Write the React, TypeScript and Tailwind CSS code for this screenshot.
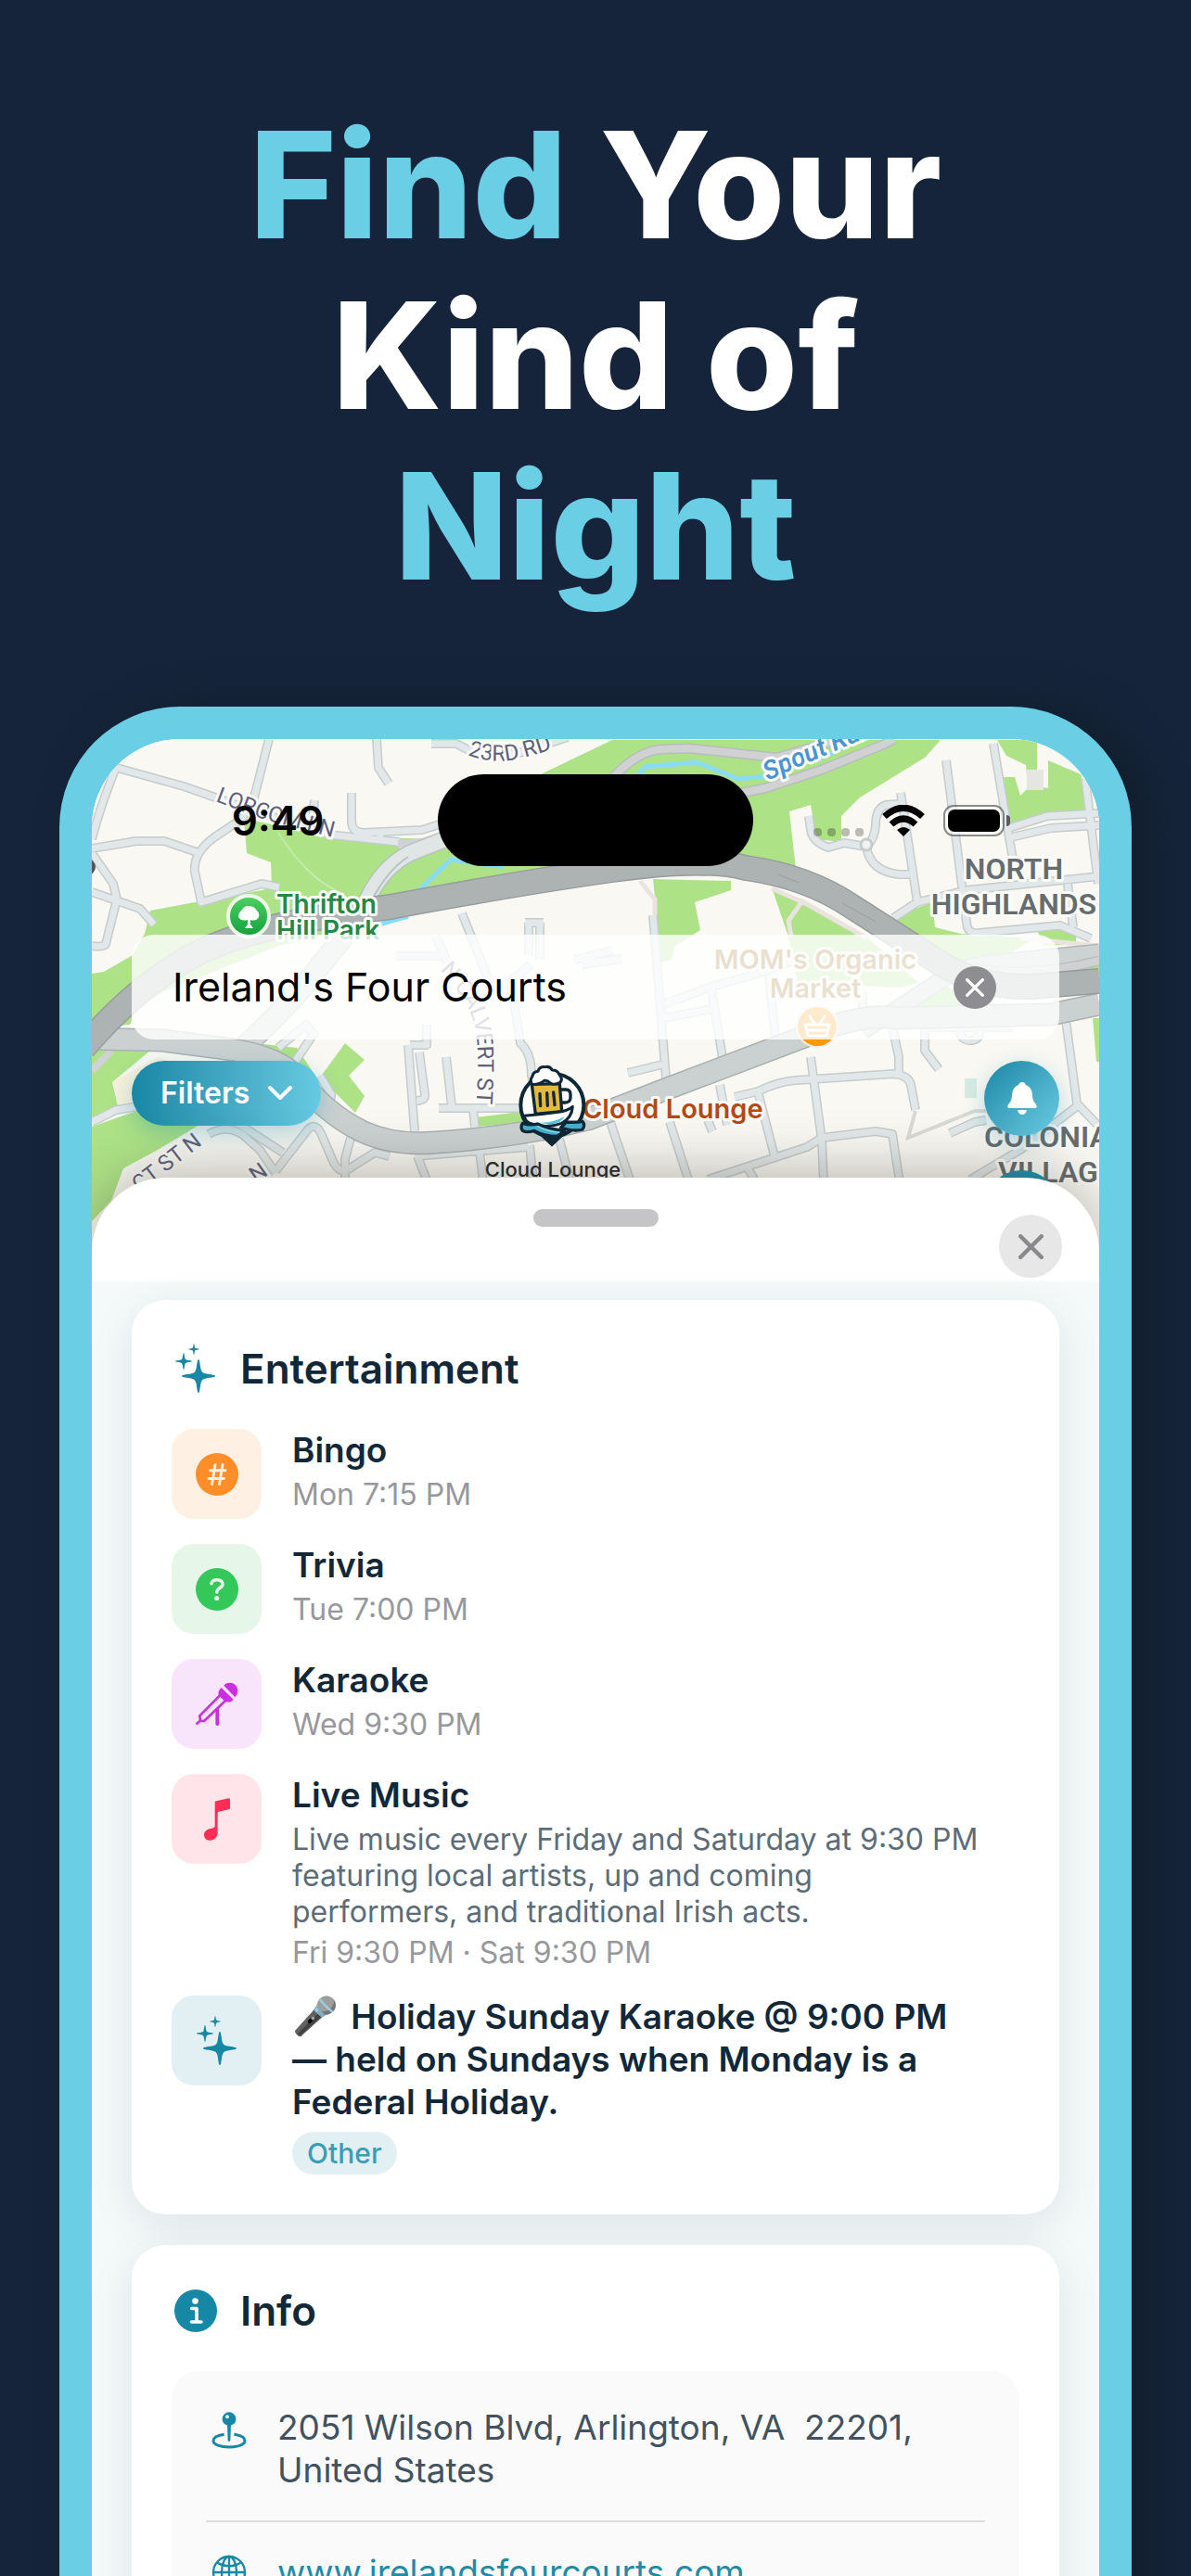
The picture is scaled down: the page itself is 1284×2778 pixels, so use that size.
import type { ReactNode } from "react";

const MINOR_ROADS = [
  "M126 828 198 848 269 873 354 900 429 908 442 920",
  "M290 797 274 860 261 883 231 903Q208 920 210 940L217 973 282 953 301 957",
  "M126 825Q108 870 99 905",
  "M406 797 408 828 419 845",
  "M465 802H492L513 813 560 812 612 795",
  "M379 855V885Q379 898 392 898L455 895 480 887",
  "M339 863 337 885",
  "M99 915 147 907H177L215 920",
  "M99 920 122 953 126 970 114 1018Q112 1022 99 1020",
  "M99 962 151 980 166 997",
  "M410 895V905",
  "M498 985 527 1057Q532 1070 550 1058L572 1040",
  "M470 1010 490 1055",
  "M551 1060 561 1125Q573 1135 573 1160L590 1230",
  "M440 1127 447 1220",
  "M442 1127H460V1105",
  "M452 1135 458 1180Q459 1187 449 1187",
  "M481 1140 487 1193",
  "M473 1195H560",
  "M510 1195 512 1215",
  "M427 1031H476",
  "M570 995V1030M582 995V1035M566 995H586",
  "M620 1035 660 1025M628 1040 670 1034",
  "M300 1130 330 1105 338 1115 318 1145",
  "M345 1160 357 1180Q358 1190 345 1185",
  "M99 1210 125 1197 150 1193",
  "M225 1223Q245 1212 262 1224L280 1240 297 1265",
  "M297 1263 332 1218Q340 1210 346 1222L358 1250Q366 1270 380 1258L404 1243 420 1247",
  "M259 1213 305 1243",
  "M378 1227 372 1250V1275",
  "M447 1247 569 1237",
  "M450 1247 461 1275",
  "M517 1242 521 1275",
  "M571 1235 575 1275",
  "M603 1228 615 1275",
  "M704 987 718 1163",
  "M767 1067 780 1147",
  "M716 1083 767 1064 817 1050 870 1030",
  "M716 1098 767 1088",
  "M677 1157 718 1147",
  "M829 1052 837 1130",
  "M930 1070V1105",
  "M874 1140 886 1230 888 1275",
  "M792 1183 817 1177Q840 1166 858 1165L964 1158Q980 1160 982 1170L987 1197",
  "M962 1107 969 1140V1157",
  "M817 1177 835 1247",
  "M763 1272 870 1237 886 1227 944 1220 962 1223 970 1275",
  "M776 1170 784 1213",
  "M722 1210 743 1275",
  "M658 1210 680 1275",
  "M763 1208 768 1220",
  "M805 1258 815 1275",
  "M1092 1108H1003Q997 1108 997 1114V1133L1012 1153",
  "M1035 1108Q1034 1122 1046 1122T1056 1108",
  "M1149 1100 1161 1190 1185 1215",
  "M1161 1193 1100 1240 1046 1272",
  "M1024 1222 1051 1210 1063 1208",
  "M1020 820 1042 995Q1043 1008 1056 1006L1143 998 1176 1012",
  "M1071 802 1092 927",
  "M1170 840 1184 953",
  "M1088 893 1129 880 1185 877",
  "M1090 903 1133 893 1185 890",
  "M1042 960 1185 945",
  "M1151 953 1157 1000",
  "M971 855 989 973",
  "M969 867 955 868Q944 872 944 890 943 905 934 913L910 909 893 914Q876 908 874 895L872 880",
  "M934 913Q938 940 970 943H981",
  "M963 990 989 973 1042 960",
];

const GREENS = [
  "M263 883 266 920 292 930 293 958 210 973 162 982 156 1007 143 1030 112 1048 99 1050V1108L140 1105 150 1080 300 1020 440 985 620 950 820 935 858 937 851 875 874 868 880 905 907 908V880L927 860 997 817 1014 798H660L583 835 480 905 360 902Z",
  "M372 1125 393 1143 376 1160 393 1182 383 1200 345 1162Z",
  "M275 1125 300 1140 340 1160 320 1130Z",
  "M99 1133H162L121 1167 127 1193 99 1205ZM99 1215 150 1197 205 1190 215 1213 170 1240 133 1260 120 1295 99 1317Z",
  "M513 1205 569 1198V1210L513 1215Z",
  "M704 948 788 950V960L749 973 755 1003 728 1020 724 1035 712 1038 708 985Z",
  "M833 960 866 970 932 1008 990 1060 970 1065 860 1060 850 1010Z",
  "M1005 973 1008 1000 1036 1007 1116 1012 1060 1045 1020 1035 960 990Z",
  "M1118 1003H1160V1018L1125 1020Z",
  "M1075 798H1118V848L1130 850 1130 820 1165 835 1178 873 1129 880 1088 893 1082 838H1094L1100 858 1108 850 1106 825 1085 815Z",
  "M955 1098 1018 1063 1096 1092Z",
  "M1140 1050 1185 1035V1050L1150 1060Z",
  "M1178 1098H1185V1145H1182Z",
];

function Halo({ children, className }: { children: ReactNode; className: string }) {
  return (
    <g className={`[paint-order:stroke] [stroke-linejoin:round] stroke-[#fbfbf8] [stroke-width:6px] ${className}`}>
      {children}
    </g>
  );
}

function BeerPin() {
  return (
    <svg x="540" y="1130" width="130" height="150" viewBox="0 0 390 450" stroke="#0f2836" strokeLinejoin="round" strokeLinecap="round">
      <path d="M108 262 165 316 222 262Z" fill="#0f2836" strokeWidth="6" />
      <circle cx="166" cy="185" r="102" fill="#fff" strokeWidth="12" />
      <path d="M195 135H210Q225 136 225 150V162Q224 176 208 177H197" fill="#fff" strokeWidth="10" />
      <path d="M100 118 190 116 197 206 112 214Z" fill="#e4b93f" strokeWidth="10" />
      <path d="M126 148 128 188M149 146 151 187M170 144 174 185" strokeWidth="10" fill="none" />
      <path d="M101 118Q92 104 102 92 104 78 120 76 124 60 143 62 158 58 166 72 184 72 188 86 202 100 192 112 170 122 160 114 150 104 140 106 122 120 101 118Z" fill="#fff" strokeWidth="9" />
      <path d="M76 220Q130 216 186 208 216 204 232 190 230 226 196 244 150 262 100 246 78 240 76 220Z" fill="#fff" strokeWidth="9" />
      <path d="M108 240Q160 248 206 222 196 244 160 248Z" fill="#55c3dc" stroke="none" />
      <path d="M70 244Q96 252 118 246 150 262 206 268L182 286Q140 286 108 268 84 276 70 268 62 256 70 244Z" fill="#45b2d0" strokeWidth="10" />
      <path d="M212 240Q240 242 264 238 274 250 264 264 236 272 194 258Z" fill="#45b2d0" strokeWidth="10" />
      <path d="M120 254Q150 270 188 274" fill="none" stroke="#8fdcec" strokeWidth="4" />
    </svg>
  );
}

function CityMap() {
  return (
    <svg
      role="img"
      aria-label="Map of North Highlands"
      className="absolute inset-x-0 top-0 h-[600px] w-full"
      viewBox="99 797 1086 600"
      preserveAspectRatio="xMidYMin slice"
    >
      <defs>
        <path id="lorcom" d="M232 864 285 884 400 914" />
        <path id="rd23" d="M504 814Q530 824 556 819T640 792" />
        <path id="spout" d="M828 842Q870 822 990 772" />
        <path id="calvert" d="M474 1046Q500 1072 510 1100T511 1220" />
        <path id="courtst" d="M150 1286 250 1210" />
        <linearGradient id="park" x1="0" y1="0" x2="0" y2="1">
          <stop offset="0" stopColor="#4fd062" />
          <stop offset="1" stopColor="#12a03c" />
        </linearGradient>
      </defs>
      <rect x="99" y="797" width="1086" height="600" fill="#f9f8f3" />
      <path d="M122 1166 170 1140 200 1150 150 1196 127 1192Z" fill="#f5f0dc" />
      <g fill="#ade287">
        {GREENS.map((d) => (
          <path key={d} d={d} />
        ))}
      </g>
      <rect x="1040" y="1163" width="13" height="21" fill="#d5ebe2" />
      <rect x="1107" y="830" width="18" height="22" fill="#e5e6e2" />
      <g fill="none" stroke="#8adcf5" strokeWidth="5">
        <path d="M452 960 486 927 543 935" />
        <path d="M689 835 695 827 751 822 796 840 830 837" />
        <path d="M880 820 927 797" />
        <path d="M405 998 440 988" />
      </g>
      <g fill="none" stroke="#ebe3df" strokeWidth="5">
        <path d="M690 950 706 970V987" />
        <path d="M866 970 850 993 853 1010" />
        <path d="M832 958 870 975 935 1012" />
        <path d="M1100 1012 1185 1020" />
      </g>
      <path d="M300 898Q330 945 362 960" fill="none" stroke="#c3ecab" strokeWidth="2" />
      <path d="M987 1198 979 1227 1051 1198H1063" fill="none" stroke="#d9dad4" strokeWidth="4" />
      <g fill="none" strokeLinejoin="round">
        <g stroke="#c6cccc" strokeWidth="10">
          {MINOR_ROADS.map((d) => (
            <path key={d} d={d} />
          ))}
        </g>
        <g stroke="#e2e8e9" strokeWidth="7">
          {MINOR_ROADS.map((d) => (
            <path key={d} d={d} />
          ))}
        </g>
        <circle cx="934" cy="911" r="6" stroke="#c6cccc" strokeWidth="3" fill="#f1f3f2" />
        <g stroke="#b9bcbd" strokeWidth="11">
          <path d="M661 838Q690 808 715 808L743 807 837 817 910 796" />
          <path d="M800 855 825 850 886 830 952 803 964 797" />
        </g>
        <g stroke="#cfd1d3" strokeWidth="8">
          <path d="M661 838Q690 808 715 808L743 807 837 817 910 796" />
          <path d="M800 855 825 850 886 830 952 803 964 797" />
          <path d="M429 910 455 908 480 900" />
        </g>
        <path d="M395 972Q412 935 442 920L480 905" stroke="#b9c0c0" strokeWidth="19" />
        <path d="M395 972Q412 935 442 920L480 905" stroke="#e0e5e6" strokeWidth="16" />
        <path d="M400 972Q418 938 440 924" stroke="#b9c0c0" strokeWidth="2" />
        <path d="M262 1130Q300 1095 328 1063L372 1008" stroke="#b4baba" strokeWidth="24" />
        <path d="M262 1130Q300 1095 328 1063L372 1008" stroke="#d0d5d5" strokeWidth="21" />
        <path d="M99 1155 120 1133" stroke="#cfd1d3" strokeWidth="8" />
        <g>
          <path d="M930 1112 1010 1060Q1040 1040 1075 1038L1185 1027" stroke="#b0b6b6" strokeWidth="19" />
          <path d="M930 1112 1010 1060Q1040 1040 1075 1038L1185 1027" stroke="#cdd3d3" strokeWidth="16" />
          <path d="M1050 1044Q1110 1055 1185 1036" stroke="#b9bcbd" strokeWidth="11" />
          <path d="M1050 1044Q1110 1055 1185 1036" stroke="#cfd1d3" strokeWidth="8" />
        </g>
        <path d="M90 1120 175 1122 251 1132Q300 1140 322 1163 350 1200 390 1220 425 1236 470 1232 560 1226 634 1207L722 1173 870 1117Q930 1092 965 1098L1133 1094 1185 1083" stroke="#a9b0b0" strokeWidth="25" />
        <path d="M90 1120 175 1122 251 1132Q300 1140 322 1163 350 1200 390 1220 425 1236 470 1232 560 1226 634 1207L722 1173 870 1117Q930 1092 965 1098L1133 1094 1185 1083" stroke="#cbd1d1" strokeWidth="22" />
        <path d="M90 1130Q150 1060 213 1028T421 978Q560 952 660 938T804 936Q870 945 919 978L1000 1030Q1050 1066 1112 1064L1185 1058" stroke="#969b9b" strokeWidth="28" />
        <path d="M90 1130Q150 1060 213 1028T421 978Q560 952 660 938T804 936Q870 945 919 978L1000 1030Q1050 1066 1112 1064L1185 1058" stroke="#adb2b2" strokeWidth="25" />
        <path d="M838 943 862 952M908 974 944 994" stroke="#989e9e" strokeWidth="1" />
      </g>
      <circle cx="94" cy="935" r="9" fill="#555" />

      <Halo className="font-['Roboto'] text-[24px] font-normal fill-[#5f6178]">
        <text><textPath href="#lorcom">LORCOM LN</textPath></text>
        <text><textPath href="#rd23">23RD RD</textPath></text>
        <text><textPath href="#calvert">N CALVERT ST</textPath></text>
        <text><textPath href="#courtst">CT ST N</textPath></text>
        <text x="276" y="1276" transform="rotate(-35 276 1276)">N</text>
      </Halo>
      <Halo className="font-['Roboto'] text-[28px] font-semibold italic fill-[#4b93d1]">
        <text><textPath href="#spout">Spout Run</textPath></text>
      </Halo>
      <Halo className="font-['Roboto'] text-[32px] font-semibold fill-[#676c6e]">
        <text x="1093" y="948" textAnchor="middle">NORTH</text>
        <text x="1093" y="986" textAnchor="middle">HIGHLANDS</text>
        <text x="1061" y="1237">COLONIAL</text>
        <text x="1076" y="1275">VILLAGE</text>
      </Halo>
      <Halo className="font-['Inter'] text-[28px] font-semibold fill-[#268746]">
        <text x="298" y="985">Thrifton</text>
        <text x="298" y="1013">Hill Park</text>
      </Halo>
      <circle cx="268" cy="988" r="22" fill="url(#park)" stroke="#eef6ea" strokeWidth="4" />
      <path d="M268 977Q274 977 276 981 280 984 279 989 276 994 270 992L270 997 273 1001H264L267 997V992Q260 994 257 989 257 984 261 981 263 977 268 977Z" fill="#fff" />
      <Halo className="font-['Inter'] text-[29px] font-semibold fill-[#8f6410]">
        <text x="879" y="1045" textAnchor="middle">MOM's Organic</text>
        <text x="879" y="1076" textAnchor="middle">Market</text>
      </Halo>
      <circle cx="881" cy="1107" r="23" fill="#f2f0ea" />
      <circle cx="881" cy="1107" r="21" fill="#f99a08" />
      <g stroke="#fff" strokeWidth="3" fill="none" strokeLinecap="round" strokeLinejoin="round">
        <path d="M868 1105H894L891 1117H871ZM873 1096 878 1104M889 1096 884 1104M870 1111H892" />
      </g>
      <Halo className="font-['Inter'] text-[29px] font-semibold fill-[#b14a17]">
        <text x="628" y="1206">Cloud Lounge</text>
      </Halo>
      <text x="596" y="1269" textAnchor="middle" className="fill-[#26292b] font-['Inter'] text-[22px] font-medium">
        Cloud Lounge
      </text>
      <BeerPin />
    </svg>
  );
}

function Star({ x, y, r }: { x: number; y: number; r: number }) {
  return (
    <path
      transform={`translate(${x} ${y}) scale(${r})`}
      d="M0-1C.09-1 .08-.62 .16-.36 .2-.24 .24-.2 .36-.16 .62-.08 1-.09 1 0S.62 .08 .36 .16C.24 .2 .2 .24 .16 .36 .08 .62 .09 1 0 1S-.08 .62-.16 .36C-.2 .24-.24 .2-.36 .16-.62 .08-1 .09-1 0S-.62-.08-.36-.16C-.24-.2-.2-.24-.16-.36-.08-.62-.09-1 0-1Z"
    />
  );
}

function Sparkles() {
  return (
    <svg aria-hidden className="h-14 w-[46px] fill-[#1687a5]" viewBox="0 0 46 56">
      <Star x={26} y={36} r={18} />
      <Star x={10} y={20} r={9} />
      <Star x={21} y={7} r={6} />
    </svg>
  );
}

function NumberIcon() {
  return (
    <svg aria-hidden className="size-[46px]" viewBox="0 0 46 46" fill="none">
      <circle cx="23" cy="23" r="23" fill="#ff8d28" />
      <path d="M21 12.500 17.500 33.500M29 12.500 25.500 33.500M15.500 18.800H32M14 27.500H30.500" stroke="#fff0e4" strokeWidth="2.900" strokeLinecap="round" />
    </svg>
  );
}

function QuestionIcon() {
  return (
    <svg aria-hidden className="size-[46px]" viewBox="0 0 46 46" fill="none">
      <circle cx="23" cy="23" r="23" fill="#34c759" />
      <path d="M17 16.800Q17.500 12.800 23 12.800T29 17.500C29 21.500 22.700 21.500 22.700 26" stroke="#e6f7ea" strokeWidth="3.600" strokeLinecap="round" />
      <circle cx="22.700" cy="32.500" r="2.600" fill="#e6f7ea" />
    </svg>
  );
}

function MicStandIcon() {
  return (
    <svg aria-hidden className="size-[50px] fill-[#cb30e0] stroke-[#cb30e0]" viewBox="88 102 150 150">
      <path stroke="none" d="M185 116C194 104 218 104 227 121 233 134 229 146 221 154Z" />
      <path stroke="none" d="M177 123 216 161C210 170 197 172 188 167L168 148C166 137 169 129 177 123Z" />
      <path fill="none" strokeWidth="8" strokeLinejoin="round" strokeLinecap="round" d="M172 148 107 214 109 230 121 231 188 167M108 230 98 239" />
      <path fill="none" strokeWidth="12" strokeLinecap="round" d="M164 194V240" />
    </svg>
  );
}

function NoteIcon() {
  return (
    <svg aria-hidden className="h-[50px] w-[38px] fill-[#ff2d55]" viewBox="106 475 114 150">
      <path d="M160 491 201 482Q205 482 205 487V513Q205 517 201 518L168 525Q165 526 165 529V592C165 608 155 618 140 618 128 618 121 610 121 601 121 589 130 582 143 580L151 578Q156 577 156 572V496Q156 492 160 491Z" />
    </svg>
  );
}

function InfoIcon() {
  return (
    <svg aria-hidden className="size-[46px]" viewBox="0 0 46 46" fill="none">
      <circle cx="23" cy="23" r="23" fill="#1687a5" />
      <circle cx="22.500" cy="12.500" r="3.300" fill="#fff" />
      <path d="M18.500 20.500H24V34.500M18.500 35H29" stroke="#fff" strokeWidth="3.600" strokeLinecap="round" strokeLinejoin="round" />
    </svg>
  );
}

function MapPinIcon() {
  return (
    <svg aria-hidden className="h-[42px] w-[38px] shrink-0" viewBox="146 62 114 126" fill="none">
      <path d="M187 138C165 141 152 149 152 159 152 171 175 179 203 179S254 171 254 159C254 149 241 141 219 138" stroke="#1687a5" strokeWidth="9" />
      <path d="M197 105H209L207 158 203 162 199 158Z" fill="#1687a5" />
      <circle cx="203" cy="88" r="22" fill="#1687a5" />
      <circle cx="197" cy="81" r="6" fill="#dff0f4" />
    </svg>
  );
}

function GlobeIcon() {
  return (
    <svg aria-hidden className="size-[38px] shrink-0" viewBox="0 0 114 114" fill="none" stroke="#1687a5" strokeWidth="7">
      <circle cx="57" cy="57" r="51" />
      <ellipse cx="57" cy="57" rx="24" ry="51" />
      <path d="M57 6V108M6 57H108M20 26Q57 48 94 26M20 88Q57 66 94 88" />
    </svg>
  );
}

function Cross({ className }: { className: string }) {
  return (
    <svg aria-hidden className={className} viewBox="0 0 24 24" fill="none" stroke="currentColor" strokeWidth="4" strokeLinecap="round">
      <path d="M2 2 22 22M22 2 2 22" />
    </svg>
  );
}

function StatusBar() {
  return (
    <div className="grid grid-cols-[1fr_340px_1fr] items-center pt-[38px] text-black">
      <time className="pl-7 text-center text-[44px] leading-none font-semibold">9:49</time>
      <div className="h-[99px] rounded-full bg-black" />
      <div className="flex items-center justify-center gap-5 pr-8">
        <div className="flex h-[34px] items-end gap-1.5">
          <span className="h-[9px] w-[9px] rounded-sm bg-black/25" />
          <span className="h-[9px] w-[9px] rounded-sm bg-black/25" />
          <span className="h-[9px] w-[9px] rounded-sm bg-black/25" />
          <span className="h-[9px] w-[9px] rounded-sm bg-black/25" />
        </div>
        <svg aria-label="Wi-Fi" className="h-[34px] w-[46px]" viewBox="0 0 46 34" fill="none" stroke="#000" strokeWidth="7">
          <path d="M2.500 12.500Q23-6 43.500 12.500" />
          <path d="M10 21Q23 9 36 21" />
          <path d="M23 34 16 27Q23 21 30 27Z" fill="#000" stroke="none" />
        </svg>
        <div className="flex items-center gap-0.5">
          <div className="h-[34px] w-[66px] rounded-[11px] border-2 border-black/45 bg-white/40 p-[3px]">
            <div className="h-full rounded-[7px] bg-black" />
          </div>
          <div className="h-3 w-1 rounded-r-full bg-black/60" />
        </div>
      </div>
    </div>
  );
}

type Entry = {
  id: string;
  title: ReactNode;
  icon: ReactNode;
  tile: string;
  time?: string;
  description?: string;
  tag?: string;
};

const ENTRIES: Entry[] = [
  { id: "bingo", title: "Bingo", time: "Mon 7:15 PM", icon: <NumberIcon />, tile: "bg-[#fff0e4]" },
  { id: "trivia", title: "Trivia", time: "Tue 7:00 PM", icon: <QuestionIcon />, tile: "bg-[#e6f7ea]" },
  { id: "karaoke", title: "Karaoke", time: "Wed 9:30 PM", icon: <MicStandIcon />, tile: "bg-[#f8e5fb]" },
  {
    id: "live-music",
    title: "Live Music",
    time: "Fri 9:30 PM · Sat 9:30 PM",
    description:
      "Live music every Friday and Saturday at 9:30 PM featuring local artists, up and coming performers, and traditional Irish acts.",
    icon: <NoteIcon />,
    tile: "bg-[#ffe5ea]",
  },
  {
    id: "holiday",
    title: (
      <>
        <span className="mr-1 text-[40px] leading-none">🎤</span>
        {" Holiday Sunday Karaoke @ 9:00 PM —\u00a0held on Sundays when Monday is a Federal Holiday."}
      </>
    ),
    tag: "Other",
    icon: <Sparkles />,
    tile: "bg-[#e2f0f4]",
  },
];

function Card({ children }: { children: ReactNode }) {
  return (
    <section className="rounded-[36px] bg-white px-[43px] pt-[43px] pb-[43px] shadow-[0_12px_50px_rgba(20,40,40,0.09)]">
      {children}
    </section>
  );
}

export default function App() {
  return (
    <main className="flex h-screen flex-col overflow-hidden bg-[#16243b] px-16 pt-[107px] font-['Inter',sans-serif]">
      <h1 className="shrink-0 text-center text-[160px] leading-[184px] font-extrabold text-white">
        <span className="text-[#6acee5]">Find</span> Your
        <br />
        Kind of
        <br />
        <span className="text-[#6acee5]">Night</span>
      </h1>

      <div className="mt-[103px] shrink-0 rounded-t-[130px] border-x-[35px] border-t-[35px] border-[#6acee5] bg-[#f4f9fa] shadow-[24px_0_44px_rgba(17,31,44,0.95)]">
        <div className="relative isolate overflow-hidden rounded-t-[95px]">
          <CityMap />
          <div className="relative">
            <StatusBar />

            <div className="mx-[43px] mt-[74px] flex h-[113px] items-center rounded-3xl bg-white/80 pr-[68px] pl-11">
              <input
                type="text"
                aria-label="Search venues"
                defaultValue="Ireland's Four Courts"
                className="min-w-0 flex-1 bg-transparent text-[43px] text-black outline-none"
              />
              <button type="button" aria-label="Clear search" className="flex size-[46px] items-center justify-center rounded-full bg-[#8e8d92] text-white">
                <Cross className="size-5" />
              </button>
            </div>

            <div className="mx-[43px] mt-[23px] flex h-[81px] items-start justify-between">
              <button
                type="button"
                className="flex h-[70px] items-center gap-5 rounded-full bg-linear-to-r from-[#1687a5] to-[#67cae2] px-[31px] text-[32px] font-semibold text-white shadow-[0_8px_24px_rgba(22,135,165,0.3)]"
              >
                Filters
                <svg aria-hidden className="h-4 w-[26px]" viewBox="0 0 26 16" fill="none" stroke="currentColor" strokeWidth="4" strokeLinecap="round" strokeLinejoin="round">
                  <path d="M2 2 13 13 24 2" />
                </svg>
              </button>
              <div className="flex flex-col gap-[37px]">
                <button
                  type="button"
                  aria-label="Notifications"
                  className="flex size-[81px] items-center justify-center rounded-full bg-linear-to-br from-[#1687a5] to-[#6acee5] shadow-[0_8px_24px_rgba(22,135,165,0.3)]"
                >
                  <svg aria-hidden className="h-[35px] w-8 fill-white" viewBox="0 0 32 35">
                    <path d="M16 0Q19 0 20 3 27 6 27 14 27 20 31 24 33 28 30 28H2Q-1 28 1 24 5 20 5 14 5 6 12 3 13 0 16 0Z" />
                    <path d="M11 30H21Q20 35 16 35T11 30Z" />
                  </svg>
                </button>
                <button type="button" aria-label="My location" className="size-[81px] shrink-0 rounded-full bg-[#1f8fac]" />
              </div>
            </div>

            <div className="relative mt-[45px] rounded-t-[80px] bg-white shadow-[0_-6px_60px_rgba(60,55,40,0.35)]">
              <header className="grid h-28 grid-cols-[1fr_auto_1fr] items-start">
                <span />
                <div className="mt-[34px] h-[19px] w-[135px] rounded-full bg-[#c5c5c8]" />
                <button type="button" aria-label="Close" className="mt-10 mr-10 flex size-[68px] items-center justify-center justify-self-end rounded-full bg-[#e7e7e7] text-[#89888d]">
                  <Cross className="size-[27px]" />
                </button>
              </header>

              <div className="flex flex-col gap-[33px] bg-[#f4f9fa] px-[43px] pt-5 pb-10">
                <Card>
                  <h2 className="flex h-[62px] items-center gap-[25px] pl-[3px] text-[44px] font-semibold text-[#122838]">
                    <Sparkles />
                    Entertainment
                  </h2>
                  <ul className="mt-[34px] flex flex-col gap-[27px]">
                    {ENTRIES.map((e) => (
                      <li key={e.id} className="flex items-start gap-[33px]">
                        <div className={`flex size-[97px] shrink-0 items-center justify-center rounded-3xl ${e.tile}`}>{e.icon}</div>
                        <div className="flex flex-col items-start gap-[5px] pr-9">
                          <h3 className="text-[37px] leading-[46px] font-semibold text-[#122838]">{e.title}</h3>
                          {e.description && <p className="text-[32px] leading-[39px] text-[#5c6c78]">{e.description}</p>}
                          {e.time && <p className="text-[32px] leading-[39px] text-[#98989c]">{e.time}</p>}
                          {e.tag && (
                            <span className="mt-1 rounded-full bg-[#e2f0f4] px-4 text-[30px] leading-[46px] font-medium text-[#3c9cb6]">{e.tag}</span>
                          )}
                        </div>
                      </li>
                    ))}
                  </ul>
                </Card>

                <Card>
                  <h2 className="flex h-14 items-center gap-[25px] pl-[3px] text-[44px] font-semibold text-[#122838]">
                    <InfoIcon />
                    Info
                  </h2>
                  <div className="mt-[37px] rounded-[30px] bg-[#fafafa] px-[37px] pt-[38px] text-[37px] leading-[46px]">
                    <div className="flex items-start gap-[33px] border-b-2 border-[#dddddf] pb-[31px] pl-1.5">
                      <span className="pt-[5px]"><MapPinIcon /></span>
                      <address className="whitespace-pre-wrap text-[#425260] not-italic">{"2051 Wilson Blvd, Arlington, VA  22201,\nUnited States"}</address>
                    </div>
                    <div className="flex items-start gap-[33px] py-[31px] pl-1.5">
                      <span className="pt-1"><GlobeIcon /></span>
                      <a href="https://www.irelandsfourcourts.com" className="text-[#1f8ba8]">www.irelandsfourcourts.com</a>
                    </div>
                  </div>
                </Card>
              </div>
            </div>
          </div>
        </div>
      </div>
    </main>
  );
}
